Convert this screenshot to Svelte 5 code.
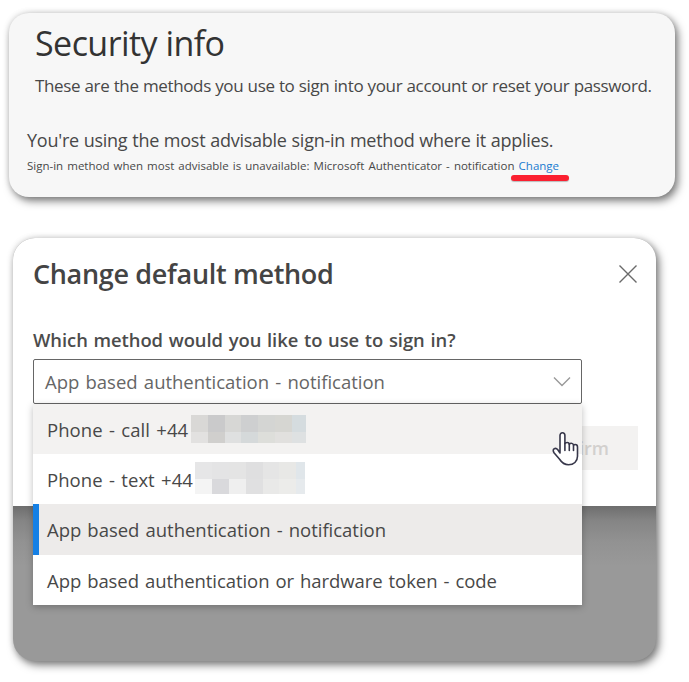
<script>
  const options = [
    {
      label: 'Phone - call +44', state: 'hovered', mask: 'call',
      cells: ['#d9d8d6', '#cacacb', '#d7d7d5', '#cecfd0', '#d4d5d3', '#d6d6d2', '#d5dcdf',
              '#e2e1e0', '#d0cfcd', '#dfe0e0', '#d5d9da', '#dddeda', '#e1e0de', '#dee1e2']
    },
    {
      label: 'Phone - text +44', state: '', mask: 'text',
      cells: ['#e6e6e7', '#e4e4e5', '#e4e4e4', '#dfdfe0', '#e5e5e5', '#e8e8e6', '#e0e6ea',
              '#f4f4f4', '#d9d9dc', '#efefef', '#e0e0e1', '#e9e9e8', '#ececea', '#e6eaed']
    },
    { label: 'App based authentication - notification', state: 'selected', cells: [] },
    { label: 'App based authentication or hardware token - code', state: 'last', cells: [] }
  ];
</script>

<main>
  <section class="info">
    <h1>Security info</h1>
    <p class="intro">These are the methods you use to sign into your account or reset your password.</p>
    <p class="using">You're using the most advisable sign-in method where it applies.</p>
    <p class="fallback">Sign-in method when most advisable is unavailable: Microsoft Authenticator - notification <a href="#change">Change</a></p>
    <div class="marker"></div>
  </section>

  <section class="frame">
    <div class="dialog">
      <header>
        <h2>Change default method</h2>
        <svg class="close" width="20" height="20" viewBox="0 0 20 20"><path d="M1.500 1.500l17 17M18.500 1.500l-17 17" /></svg>
      </header>
      <p class="question">Which method would you like to use to sign in?</p>
      <div class="picker">
        <div class="select">
          <span>App based authentication - notification</span>
          <svg width="18" height="11" viewBox="0 0 18 11"><path d="M1 1.500l8 8 8-8" /></svg>
        </div>
        <ul class="menu">
          {#each options as option}
            <li class={option.state}>
              <span class="label" class:phone={option.mask}>{option.label}</span>
              {#if option.cells.length}
                <div class="mask {option.mask}">
                  {#each option.cells as color}
                    <i style="background: {color}"></i>
                  {/each}
                </div>
              {/if}
            </li>
          {/each}
        </ul>
      </div>
      <button class="confirm">Confirm</button>
      <svg class="hand" width="28" height="36" viewBox="0 0 28 36">
        <path d="M8 22V4.500C8 2.800 9.100 1.700 10.400 1.700s2.500 1.100 2.500 2.800v8.200c.5-.8 1.300-1.200 2.200-1.200 1.100 0 2 .7 2.200 1.800.5-.7 1.200-1 2-1 1.100 0 2 .7 2.200 1.900.4-.4 1-.7 1.700-.7 1.400 0 2.300 1 2.300 2.500v9.300c0 5.200-3.800 8.500-9 8.500-4.600 0-6.800-2.200-8.900-5.500L2 21.700c-1.300-2-.8-3.300.3-3.900 1.200-.7 2.500-.2 3.500 1z" />
        <path d="M12.900 12.500v7M17.300 13.500v6M21.500 14.500v5" />
      </svg>
    </div>
  </section>
</main>

<style>
  :global(body) { background: #fff; }
  main {
    box-sizing: border-box;
    width: 689px;
    height: 682px;
    padding: 13px 0 0 9px;
    overflow: hidden;
    font-family: "Open Sans", "Noto Sans", sans-serif;
    color: #484848;
  }
  h1, h2, p, ul { margin: 0; padding: 0; font-weight: 400; }
  h1, h2, p, li, .select { white-space: nowrap; }

  .info {
    box-sizing: border-box;
    width: 666px;
    height: 184px;
    padding: 6px 0 0 18px;
    border-radius: 20px;
    background: #f7f7f7;
    box-shadow: 3px 4px 8px rgba(0, 0, 0, .5), 0 0 6px rgba(0, 0, 0, .14);
  }
  h1 { padding-left: 8px; font-size: 34px; line-height: 48px; letter-spacing: -.55px; color: #333; }
  .intro { padding: 6px 0 0 8px; font-size: 17px; line-height: 26px; letter-spacing: -.36px; word-spacing: .25px; }
  .using { margin-top: 28px; font-size: 18px; line-height: 26px; letter-spacing: -.25px; word-spacing: .4px; }
  .fallback { padding-top: 1px; font-size: 11.5px; line-height: 24px; letter-spacing: 0; word-spacing: 1.1px; }
  a { color: #1b7bd0; text-decoration: none; }
  .marker { width: 58px; height: 6px; margin: -3px 0 0 484px; border-radius: 3px; background: #fb2030; box-shadow: 0 1px 1px rgba(0, 0, 0, .25); }

  .frame {
    width: 643px;
    height: 423px;
    margin: 41px 0 0 4px;
    border-radius: 22px;
    background: #999;
    box-shadow: 3px 4px 8px rgba(0, 0, 0, .5), 0 0 6px rgba(0, 0, 0, .14);
  }
  .dialog {
    position: relative;
    box-sizing: border-box;
    height: 268px;
    padding: 17px 20px 0;
    border-radius: 22px 22px 0 0;
    background: #fff;
  }
  .dialog::after {
    content: "";
    position: absolute;
    z-index: 0;
    left: 0;
    top: 268px;
    width: 100%;
    height: 60px;
    background: linear-gradient(#6e6e6e, #858585 25%, #929292 60%, #999);
  }
  header { display: flex; justify-content: space-between; }
  h2 { font-size: 27px; line-height: 38px; font-weight: 600; letter-spacing: -.32px; color: #444; }
  .close { margin: 9px -2px 0 0; fill: none; stroke: #6a6a6a; stroke-width: 1.4; }
  .question { margin-top: 34px; font-size: 18.4px; line-height: 26px; font-weight: 600; letter-spacing: -.04px; word-spacing: .95px; color: #4c4c4c; }
  .picker { width: 549px; margin-top: 6px; }
  .select {
    box-sizing: border-box;
    display: flex;
    justify-content: space-between;
    align-items: center;
    height: 45px;
    padding: 0 10px 1px 11px;
    border: 1.5px solid #666;
    border-radius: 2px;
    background: #fff;
    font-size: 18.5px;
    letter-spacing: -.02px;
    word-spacing: 1.5px;
    color: #666;
  }
  .select svg { fill: none; stroke: #999; stroke-width: 1.4; }
  .menu {
    position: relative;
    z-index: 1;
    list-style: none;
    background: #fff;
    box-shadow: 0 2px 7px rgba(0, 0, 0, .26);
  }
  li {
    box-sizing: border-box;
    display: flex;
    align-items: center;
    height: 50px;
    padding-left: 14px;
    font-size: 18.5px;
    letter-spacing: -.02px;
    word-spacing: 1.3px;
    color: #484848;
  }
  .hovered { background: #f3f2f1; }
  .selected { height: 51px; padding-left: 8px; border-left: 6px solid #1580e5; background: #edebea; }
  .last { letter-spacing: -.07px; }
  .label { flex: none; }
  .phone { letter-spacing: .05px; word-spacing: 1.5px; }
  .mask { position: absolute; display: grid; }
  .call { left: 158px; top: 11px; grid-template: 17px 11px / repeat(6, 16.800px) 14px; }
  .text { left: 162px; top: 58px; grid-template: 17px 15px / repeat(6, 16.900px) 9px; }
  .confirm {
    position: absolute;
    left: 510px;
    top: 188px;
    width: 115px;
    height: 44px;
    padding: 0 29px 0 0;
    border: 0;
    background: #f3f2f1;
    text-align: right;
    font: 600 18px "Open Sans", sans-serif;
    color: #d2d0ce;
  }
  .hand {
    position: absolute;
    z-index: 2;
    left: 539px;
    top: 193px;
    fill: #fff;
    stroke: #37374a;
    stroke-width: 1.6;
    stroke-linejoin: round;
    stroke-linecap: round;
  }
</style>
